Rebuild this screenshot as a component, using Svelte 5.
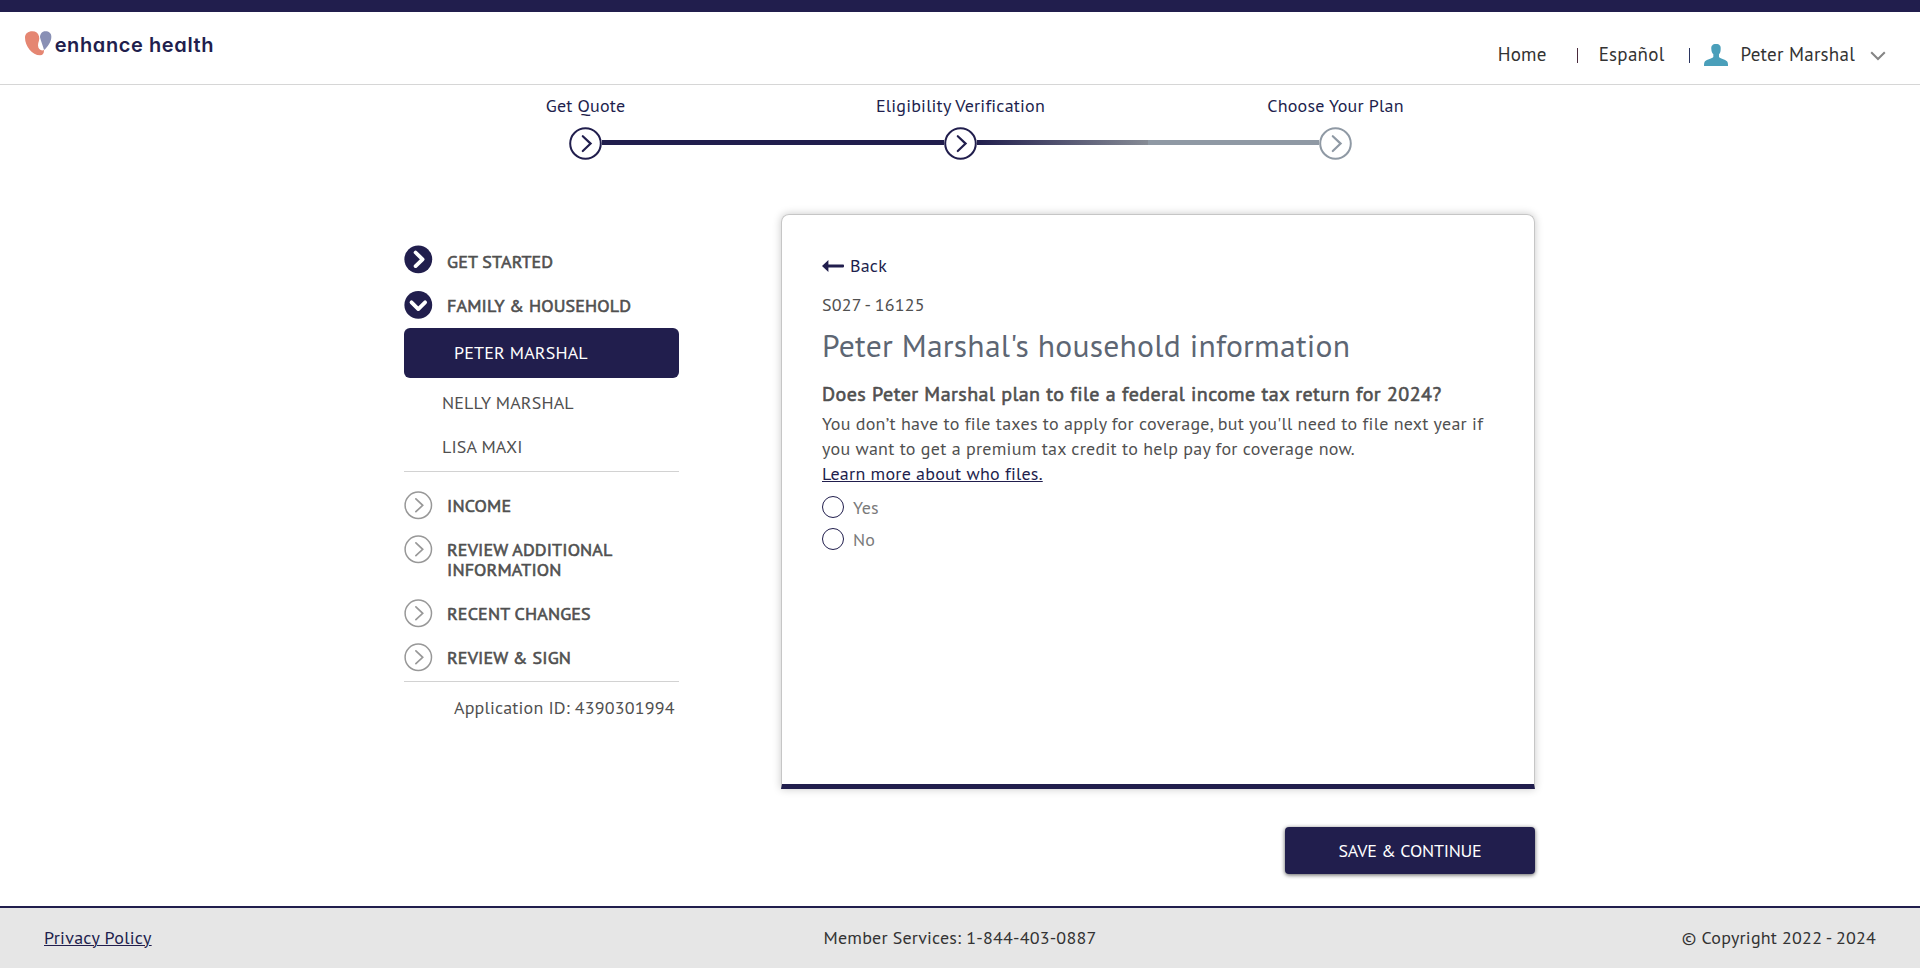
<script>
  const members = ['PETER MARSHAL', 'NELLY MARSHAL', 'LISA MAXI'];
  const upcoming = ['INCOME', 'REVIEW ADDITIONAL INFORMATION', 'RECENT CHANGES', 'REVIEW & SIGN'];
  const steps = ['Get Quote', 'Eligibility Verification', 'Choose Your Plan'];
</script>

{#snippet stepDot(color)}
  <svg viewBox="0 0 33 33" width="33" height="33" fill="none" stroke={color}>
    <circle cx="16.5" cy="16.5" r="15.3" stroke-width="2" fill="#fff" />
    <path d="M13.8 9.2 21.6 16.6 13.8 24" stroke-width="2.2" stroke-linecap="round" />
  </svg>
{/snippet}

<div class="page">
  <header>
    <div class="logo">
      <svg viewBox="75 92 80 74" width="26.7" height="24.7">
        <path fill="#e58672" d="M97 93C84 93 75 100 75 112C75 137 97 165 120 165C128 165 132 160 132 149C124 153 114 147 114 135C114 126 120 118 117 108C114 98 108 93 97 93Z" />
        <path fill="#8990b5" d="M136 93C126 93 120 101 120 111C123 124 129 138 132 149C142 140 154 125 154 109C154 99 147 93 136 93Z" />
      </svg>
      <span>enhance health</span>
    </div>
    <nav>
      <a href="#home">Home</a>
      <i class="bar first"></i>
      <a href="#es">Español</a>
      <i class="bar second"></i>
      <svg class="user" viewBox="0 0 72 66" width="24" height="22" fill="#4a9fba">
        <path d="M36 0C25 0 21 6 22 15C22 21 24 27 28 31V39C26 44 8 46 3 52C0 56 0 61 0 66H72C72 61 72 56 69 52C64 46 47 44 45 39V31C49 27 50 21 50 15C51 6 47 0 36 0Z" />
      </svg>
      <a href="#account">Peter Marshal</a>
      <svg class="caret" viewBox="0 0 16 10" width="16" height="10" fill="none" stroke="#858585" stroke-width="2">
        <path d="M1.2 1.2 8 8 14.8 1.2" />
      </svg>
    </nav>
  </header>

  <section class="progress">
    <div class="labels">
      {#each steps as s}<span>{s}</span>{/each}
    </div>
    <div class="track">
      {@render stepDot('#211e4d')}
      <div class="line done"></div>
      {@render stepDot('#211e4d')}
      <div class="line half"></div>
      {@render stepDot('#8f99a4')}
    </div>
  </section>

  <main>
    <aside>
      <div class="row first-row">
        <svg viewBox="0 0 28 28" width="28" height="28"><circle cx="14.3" cy="14.3" r="13.9" fill="#211e4d" /><path d="M11.6 7.5 18.6 14.3 11.6 21.1" fill="none" stroke="#fff" stroke-width="3.8" stroke-linecap="round" stroke-linejoin="round" /></svg>
        <b>GET STARTED</b>
      </div>
      <div class="row">
        <svg viewBox="0 0 28 28" width="28" height="28"><circle cx="14.3" cy="13.9" r="13.9" fill="#211e4d" /><path d="M7.5 11.3 14.3 18.1 21.1 11.3" fill="none" stroke="#fff" stroke-width="3.8" stroke-linecap="round" stroke-linejoin="round" /></svg>
        <b>FAMILY &amp; HOUSEHOLD</b>
      </div>
      {#each members as m, i}
        <div class="member" class:active={i === 0}>{m}</div>
      {/each}
      <hr class="mid" />
      {#each upcoming as u}
        <div class="row">
          <svg viewBox="0 0 28 28" width="28" height="28" fill="none" stroke="#989898"><circle cx="14.3" cy="14.3" r="13.2" stroke-width="1.5" /><path d="M11.9 7.9 18.7 14.3 11.9 20.7" stroke-width="1.7" stroke-linecap="round" /></svg>
          <b>{u}</b>
        </div>
      {/each}
      <hr class="end" />
      <p class="app-id">Application ID: 4390301994</p>
    </aside>

    <div class="content">
      <div class="card">
        <a class="back" href="#back">
          <svg viewBox="0 0 22 12" width="22" height="12" fill="#211e4d"><path d="M0 6 6.4 0V4.6H21.2Q22 4.6 22 5.4V6.6Q22 7.4 21.2 7.4H6.4V12Z" /></svg>
          <span>Back</span>
        </a>
        <p class="code">S027 - 16125</p>
        <h1>Peter Marshal's household information</h1>
        <h2>Does Peter Marshal plan to file a federal income tax return for 2024?</h2>
        <p class="help">You don’t have to file taxes to apply for coverage, but you'll need to file next year if you want to get a premium tax credit to help pay for coverage now.</p>
        <a class="learn" href="#learn">Learn more about who files.</a>
        <div class="options">
          {#each ['Yes', 'No'] as o}
            <label><input type="radio" name="file" /><span>{o}</span></label>
          {/each}
        </div>
      </div>
      <button>SAVE &amp; CONTINUE</button>
    </div>
  </main>

  <footer>
    <a href="#privacy">Privacy Policy</a>
    <span>Member Services: 1-844-403-0887</span>
    <span class="copy">© Copyright 2022 - 2024</span>
  </footer>
</div>

<style>
  :global(body) { margin: 0; background: #fff; }
  .page {
    width: 1920px;
    height: 968px;
    box-sizing: border-box;
    display: flex;
    flex-direction: column;
    border-top: 12px solid #211e4d;
    overflow: hidden;
    font: 18px/24px "PT Sans", Lato, sans-serif;
    letter-spacing: 0.2px;
    color: #505050;
  }
  a { color: inherit; text-decoration: none; }
  svg { display: block; flex: none; }
  p, h1, h2 { margin: 0; }

  header {
    height: 72px;
    flex: none;
    display: flex;
    justify-content: space-between;
    align-items: flex-start;
    border-bottom: 1px solid #d6d6d6;
    padding: 0 34px 0 25px;
  }
  .logo { display: flex; gap: 3px; padding-top: 19px; }
  .logo span {
    font: 600 20px/24px Inter, sans-serif;
    font-feature-settings: "cv11";
    letter-spacing: 0.6px;
    color: #211e4d;
    padding-top: 2px;
  }
  nav { display: flex; align-items: flex-start; padding-top: 30px; font-size: 19px; color: #333; letter-spacing: 0.25px; }
  .bar { width: 1px; height: 15px; background: #4a2b3c; }
  .first { margin: 6px 21px 0 30px; }
  .second { margin: 6px 14px 0 25px; background: #2b3560; }
  .user { margin: 2px 12px 0 0; }
  .caret { margin: 9px 0 0 15px; }

  .progress { padding: 9px 0 0 1px; color: #211e4d; flex: none; height: 121px; box-sizing: border-box; }
  .labels { display: grid; grid-template-columns: repeat(3, 375px); justify-content: center; text-align: center; }
  .track { display: flex; justify-content: center; margin-top: 9px; }
  .line { width: 342px; height: 5px; margin-top: 13px; }
  .done { background: #211e4d; }
  .half { background: linear-gradient(90deg, #211e4d 0%, #868b95 50%, #8f99a4 50%); }

  main { width: 1131px; margin: 8px 0 0 404px; display: flex; gap: 102px; flex: none; height: 660px; }
  aside { width: 275px; padding-top: 26px; flex: none; }
  .row { display: flex; gap: 15px; padding: 12px 0; height: min-content; }
  .row svg { margin: -5px 0 -5px; overflow: visible; }
  .first-row svg { margin-top: -7px; }
  .row b { line-height: 20px; letter-spacing: 0.15px; max-width: 200px; }
  b, h2 { font-weight: 400; -webkit-text-stroke: 0.6px currentColor; }
  .member { box-sizing: border-box; height: 44px; line-height: 45px; padding-left: 38px; letter-spacing: 0.15px; }
  .active { height: 50px; line-height: 50px; margin: 0 0 2px; border-radius: 6px; background: #211e4d; color: #fff; padding-left: 50px; }
  hr { border: 0; height: 1px; background: #d2d2d2; }
  .mid { margin: 3px 0 12px; }
  .end { margin: 1px 0 16px; }
  .app-id { padding-left: 50px; line-height: 20px; white-space: nowrap; letter-spacing: 0.17px; }

  .content { width: 754px; display: flex; flex-direction: column; }
  .card {
    box-sizing: border-box;
    height: 575px;
    padding: 39px 40px 0;
    border: 1px solid #c6c6c6;
    border-bottom: 5px solid #211e4d;
    border-radius: 8px 8px 0 0;
    box-shadow: 0 0 8px rgba(0, 0, 0, 0.22);
  }
  .back { display: flex; align-items: center; gap: 6px; color: #211e4d; }
  .back svg { margin-top: -1px; }
  .code { margin-top: 15px; }
  h1 { margin-top: 9px; font-size: 31.6px; line-height: 40px; font-weight: 400; letter-spacing: 0.25px; color: #5d6673; white-space: nowrap; }
  h2 { margin-top: 16px; font-size: 20px; line-height: 25px; letter-spacing: 0.47px; white-space: nowrap; }
  .help { margin-top: 4px; line-height: 25px; letter-spacing: 0.27px; }
  .learn { display: block; width: max-content; line-height: 25px; letter-spacing: 0.24px; color: #211e4d; }
  .learn, footer a { text-decoration: underline; text-decoration-thickness: 1px; text-underline-offset: 1px; }
  .options { margin-top: 5px; color: #7a7a7a; }
  label { display: flex; align-items: center; gap: 9px; height: 32px; }
  label span { padding-top: 1px; }
  input { appearance: none; box-sizing: border-box; width: 22px; height: 22px; margin: 0; border: 1px solid #211e4d; border-radius: 50%; }
  button {
    align-self: flex-end;
    margin-top: 38px;
    width: 250px;
    height: 47px;
    padding: 0;
    border: 0;
    border-radius: 4px;
    background: #211e4d;
    box-shadow: 0 1px 4px rgba(0, 0, 0, 0.65);
    color: #fff;
    font: inherit;
    letter-spacing: -0.23px;
  }

  footer {
    margin-top: 32px;
    height: 62px;
    flex: none;
    box-sizing: border-box;
    border-top: 2px solid #211e4d;
    background: #e6e6e6;
    display: grid;
    grid-template-columns: 1fr auto 1fr;
    padding: 18px 44px 0;
    color: #333;
  }
  footer a { color: #211e4d; justify-self: start; letter-spacing: 0.27px; }
  .copy { text-align: right; }
</style>
